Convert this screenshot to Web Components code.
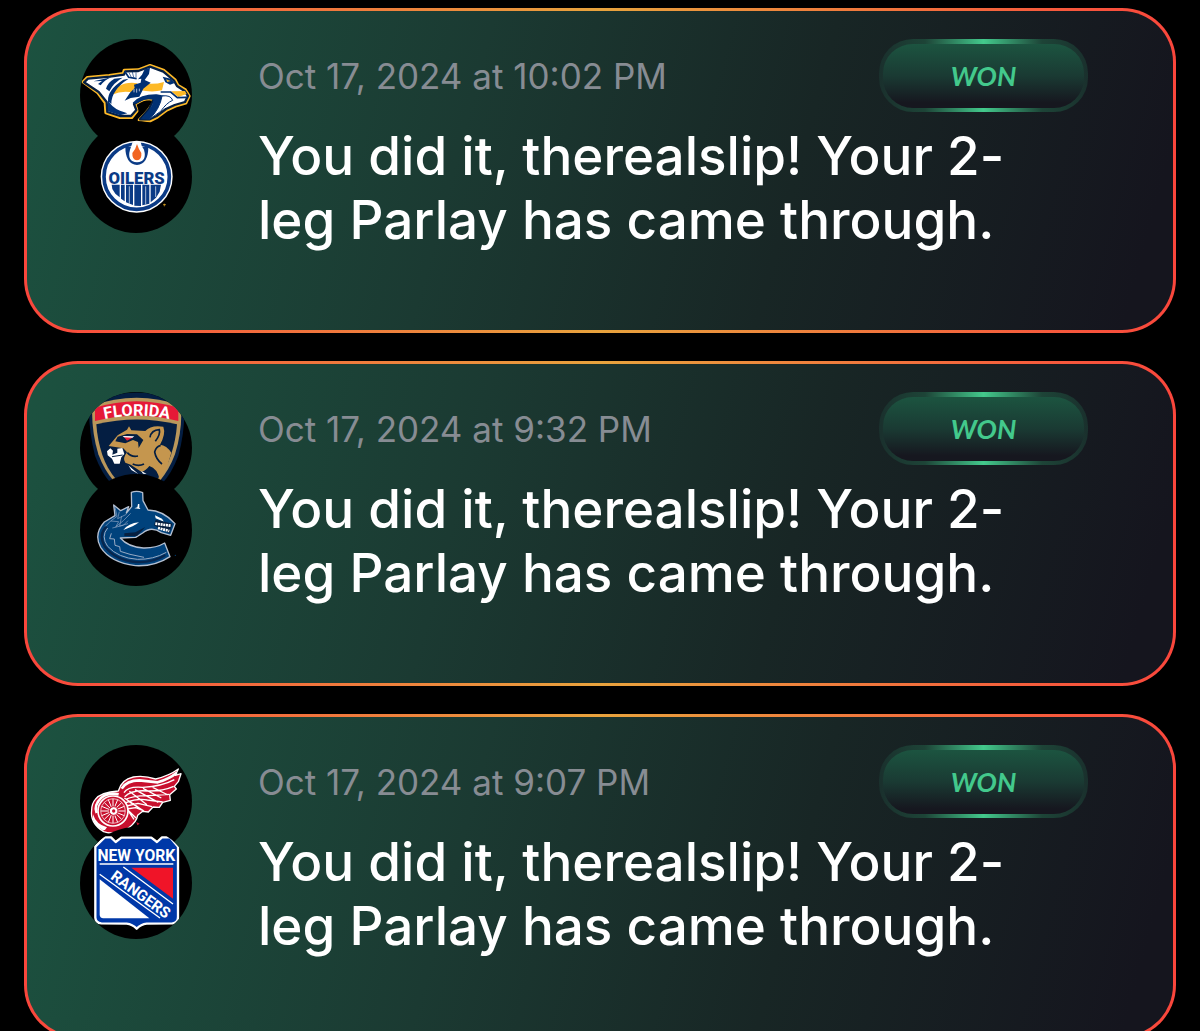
<!DOCTYPE html>
<html lang="en">
<head>
<meta charset="utf-8">
<meta name="viewport" content="width=device-width, initial-scale=1">
<title>Notifications</title>
<style>
  body {
    margin: 0;
    background: #000;
    color: #fff;
    font-family: Inter, "Liberation Sans", sans-serif;
  }
</style>
</head>
<body>
<notification-feed>
  <bet-card>
    <team-logo slot="teams" team="predators"></team-logo>
    <team-logo slot="teams" team="oilers"></team-logo>
    <time slot="date" datetime="2024-10-17T22:02">Oct 17, 2024 at 10:02 PM</time>
    <status-badge slot="status">WON</status-badge>
    You did it, therealslip! Your 2-leg Parlay has came through.
  </bet-card>
  <bet-card>
    <team-logo slot="teams" team="panthers"></team-logo>
    <team-logo slot="teams" team="canucks"></team-logo>
    <time slot="date" datetime="2024-10-17T21:32">Oct 17, 2024 at 9:32 PM</time>
    <status-badge slot="status">WON</status-badge>
    You did it, therealslip! Your 2-leg Parlay has came through.
  </bet-card>
  <bet-card>
    <team-logo slot="teams" team="redwings"></team-logo>
    <team-logo slot="teams" team="rangers"></team-logo>
    <time slot="date" datetime="2024-10-17T21:07">Oct 17, 2024 at 9:07 PM</time>
    <status-badge slot="status">WON</status-badge>
    You did it, therealslip! Your 2-leg Parlay has came through.
  </bet-card>
</notification-feed>

<script>
const LOGOS = {
  predators: {
    label: 'Nashville Predators',
    viewBox: '30 27 336 336',
    art: `
      <path fill="#fdb927" stroke="#fdb927" stroke-width="10" stroke-linejoin="round" d="M40 156 52 143 118 137 160 131 163 121 205 120 240 107 282 122 315 150 323 166 346 180 357 198 347 219 316 228 290 240 262 261 240 272 208 270 235 237 250 205 222 208 196 224 203 240 185 262 150 262 108 248 106 218 84 188Z"/>
      <path fill="#fff" stroke="#041e42" stroke-width="7" stroke-linejoin="round" d="M42 157 54 146 120 140 162 134 166 124 205 123 240 110 280 125 312 152 321 168 344 183 354 198 345 216 314 225 288 237 260 258 238 268 210 268 237 237 254 202 222 204 192 222 199 240 183 258 150 258 112 246 110 216 86 186Z"/>
      <path fill="#fdb927" d="M126 194Q142 158 186 158L202 160 190 188Q158 180 126 194ZM216 158Q248 166 282 156L276 181Q246 188 208 180ZM303 184 345 183 350 192 325 201Z"/>
      <path fill="#003073" d="M70 154 124 142Q104 150 92 166L84 162 96 153ZM133 146 158 143Q130 158 118 184L108 176Q114 156 133 146ZM160 149 176 146Q150 162 137 182 124 200 124 222L114 212Q112 180 160 149ZM224 118 240 113 237 132 224 150 242 158 220 176 208 200 182 204 164 212 180 188 194 174 192 164 212 158 214 146 204 148 216 134ZM114 210Q124 232 150 242L172 250 150 256 114 244ZM260 193 284 197Q284 222 268 240L238 269 212 268 236 240Q250 222 250 209 226 204 208 216 196 224 188 218 212 192 260 193ZM278 140 302 146 314 159 300 164 286 157Z"/>
      <path fill="none" stroke="#003073" stroke-width="5" d="M272 186 302 186 322 203 350 202M164 124 176 142 200 146"/>
      <path fill="#fff" stroke="#003073" stroke-width="3" d="M276 198Q302 194 308 211 290 218 272 244L238 268Q270 236 276 198Z"/>
      <path fill="#000" d="M200 224Q224 208 246 212 240 232 206 264L194 262 206 246 204 236Z"/>
      <path stroke="#003073" stroke-width="2" fill="none" d="M177 128 184 142M187 126 191 142M198 127 198 142"/>
      <path stroke="#fff" stroke-width="2" fill="none" d="M192 187V177M200 188V176M208 184V176"/>
      <path fill="#fdb927" d="M288 148 302 153 292 156Z"/>`
  },
  oilers: {
    label: 'Edmonton Oilers',
    viewBox: '30 -12 336 336',
    art: `
      <circle cx="200" cy="155" r="108" fill="#fff"/>
      <circle cx="200" cy="155" r="98" fill="#fff" stroke="#0b3b86" stroke-width="11"/>
      <path fill="#0b3b86" d="M166 65 235 65Q235 117 201 120 166 117 166 65Z"/>
      <path fill="#fff" d="M188 51 212 51Q214 65 222 74 232 109 201 112 170 109 180 74Z"/>
      <path fill="#f26522" d="M201 57Q206 73 214 84 216 105 201 106 186 105 187 84 197 73 201 57Z"/>
      <text x="200" y="176" text-anchor="middle" font-family="Roboto, sans-serif" font-size="50" font-weight="900" fill="#0b3b86">OILERS</text>
      <path fill="#0b3b86" d="M125 179H149V217L136 206 127 192ZM153 179H164V229L153 221ZM168 179H189V240L168 232ZM193 179H213V243L193 242ZM217 179H238V236L217 241ZM242 179H273L269 200 258 218 242 232Z"/>
      <path stroke="#fff" stroke-width="2" d="M178 184V236M227 184V238M257 184V216"/>
      <path stroke="#fdb927" stroke-width="2" d="M279 239H288M283 236V244"/>`
  },
  panthers: {
    label: 'Florida Panthers',
    viewBox: '30 24 336 336',
    art: `
      <path fill="#041e42" d="M58 56Q200 -5 342 56 347 135 325 215 286 320 200 350 114 320 75 215 54 135 58 56Z"/>
      <path fill="#b9975b" d="M67 65Q200 18 333 65 338 137 315 211 280 305 200 345 120 305 85 211 63 137 67 65Z"/>
      <path fill="#e51937" d="M75 71Q200 32 325 71L325 111Q200 80 75 111Z"/>
      <path fill="#041e42" d="M79 121Q200 92 321 121 318 167 303 213 274 296 200 334 126 296 97 213 82 167 79 121Z"/>
      <path id="arc" fill="none" d="M84 110Q200 80 318 110"/>
      <text font-family="Roboto, sans-serif" font-size="49" font-weight="700" fill="#fff"><textPath href="#arc" startOffset="50%" text-anchor="middle">FLORIDA</textPath></text>
      <path fill="#c5964e" d="M116 186 143 154 171 137 177 127 184 139 226 141Q243 122 280 128 288 149 270 182 290 184 304 206L290 252 270 290Q262 252 238 246 226 262 214 263L182 242 166 236Q156 224 171 205L160 193Z"/>
      <path fill="#041e42" d="M143 158 171 150 201 151 220 168 206 192 204 174 189 168 166 178 136 172Z"/>
      <path fill="none" stroke="#041e42" stroke-width="5" d="M240 160Q244 138 268 137 272 150 256 172M272 184Q258 188 254 204 258 226 276 240M172 206Q184 220 204 216M188 240Q206 248 222 240"/>
      <path fill="#e51937" d="M160 157 190 160 171 170Z"/>
      <path fill="#fff" d="M158 156 193 157 187 161 162 160ZM111 202 121 193 129 200 127 212 142 206 142 194 157 192 163 210 154 220 149 239 133 239 126 224 113 214ZM175 244 205 270 184 258ZM213 260 230 270 219 269Z"/>
      <path stroke="#041e42" stroke-width="3" fill="none" d="M126 218 158 213"/>`
  },
  canucks: {
    label: 'Vancouver Canucks',
    viewBox: '30 -15 336 336',
    art: `
      <path fill="#00427c" stroke="#b4bfd0" stroke-width="4" stroke-linejoin="round" d="M184 40Q201 34 218 41L219 65 234 93Q280 94 315 134L302 169 274 161Q244 140 218 162L197 175 151 177Q174 204 220 207 257 208 284 192L300 233Q255 263 196 260 121 250 92 205 70 166 103 129L135 110 131 78 152 95 176 83 169 102 185 83Z"/>
      <path stroke="#07264e" stroke-width="7" fill="none" d="M110 143Q84 166 104 202 138 246 200 249 251 251 286 228"/>
      <path stroke="#97aac4" stroke-width="3" fill="none" stroke-linejoin="round" d="M113 147Q92 172 113 202 145 237 202 241 250 242 289 220M124 163 119 179 133 180 135 199 149 203 151 217 180 226 222 235"/>
      <path stroke="#92a8c6" stroke-width="2" fill="none" d="M134 80 141 112 122 126 146 128 137 144 160 125 182 103M122 126 106 142M148 98 143 119 169 106M127 147 160 139 174 125M155 111 149 141 174 134"/>
      <path fill="#fff" d="M160 153Q175 133 207 130 192 142 160 153ZM193 88 202 85 204 75 208 75V86L212 90ZM255 109 276 119 282 128 257 118Z"/>
      <path fill="#061f3f" d="M163 163 196 160 226 144 201 171 163 171ZM257 122 287 129 307 134 298 163 274 151 252 139Z"/>
      <path stroke="#fff" stroke-width="8" stroke-dasharray="6 2" fill="none" d="M256 134 302 140M264 147 298 156"/>
      <circle cx="316" cy="229" r="2" fill="#00427c"/>`
  },
  redwings: {
    label: 'Detroit Red Wings',
    viewBox: '30 15 336 336',
    art: `
      <path fill="#c8102e" stroke="#fff" stroke-width="4" stroke-linejoin="round" d="M76 178Q92 157 145 153 154 119 190 111 220 105 257 117 298 107 325 87L316 106 333 101 325 125 313 139 319 147 299 164 301 181 278 187 268 202 249 201 235 216 218 214 203 226Q200 246 175 264 132 287 101 275 59 249 65 210 65 191 76 178Z"/>
      <path stroke="#fff" stroke-width="8" fill="none" d="M80 219Q70 197 94 173 115 156 146 163M155 146Q170 121 208 121L263 127Q299 116 320 98"/>
      <path stroke="#fff" stroke-width="4" fill="none" stroke-linejoin="round" d="M162 158Q174 138 218 142 277 139 313 119M164 170Q185 149 231 153 278 154 311 139M167 178Q196 165 238 167L298 163M168 188Q203 174 232 180L278 186M170 198 204 190 246 200M170 207 197 203 220 212M163 174 205 202M178 154 231 194M195 149 265 187M219 145 274 174M248 142 294 165M168 205 198 234M177 185 222 213M160 191 192 238"/>
      <circle cx="129" cy="213" r="45" fill="#c8102e" stroke="#fff" stroke-width="5"/>
      <circle cx="129" cy="213" r="37" fill="none" stroke="#fff" stroke-width="2"/>
      <path stroke="#fff" stroke-width="3" d="M129 177V249M93 213H165M103 188 155 238M103 238 155 188M115 179 143 247M143 179 115 247M95 199 163 227M95 227 163 199"/>
      <circle cx="131" cy="213" r="13" fill="#fff" stroke="#c8102e" stroke-width="3"/>
      <circle cx="131" cy="213" r="5" fill="#c8102e"/>
      <path fill="#fff" d="M69 223Q78 253 111 262 107 271 99 271 63 252 69 223Z"/>
      <path fill="#c8102e" d="M199 246 209 251 202 256Z"/>`
  },
  rangers: {
    label: 'New York Rangers',
    viewBox: '30 6 336 336',
    art: `
      <path fill="#0038a8" stroke="#fff" stroke-width="7" stroke-linejoin="round" d="M76 65 104 37 123 37 137 51 154 38H244L261 51 276 37H300L324 65V278Q323 294 307 295L230 296Q213 298 200 311 187 298 170 296L94 295Q77 294 76 278Z"/>
      <path stroke="#fff" stroke-width="5" d="M89 117H310"/>
      <path fill="#f01428" d="M184 128H309V221Z"/>
      <path fill="#fff" d="M89 163 238 280H100Q89 280 89 268Z"/>
      <path stroke="#fff" stroke-width="4" fill="none" d="M89 148 270 279M160 126 309 237"/>
      <text x="199" y="107" text-anchor="middle" font-family="Roboto, sans-serif" font-size="47" font-weight="700" fill="#fff">NEW YORK</text>
      <text transform="translate(119 160) rotate(36)" font-family="Roboto, sans-serif" font-size="46" font-weight="700" fill="#fff">RANGERS</text>`
  }
};

class NotificationFeed extends HTMLElement {
  constructor() {
    super();
    this.attachShadow({ mode: 'open' });
    this.shadowRoot.innerHTML = `
      <style>
        :host {
          display: block;
          height: 100vh;
          overflow-y: auto;
          scrollbar-width: none;
        }
        main {
          display: flex;
          flex-direction: column;
          gap: 28px;
          padding: 8px 24px;
        }
      </style>
      <main><slot></slot></main>
    `;
  }
}

class BetCard extends HTMLElement {
  constructor() {
    super();
    this.attachShadow({ mode: 'open' });
    this.shadowRoot.innerHTML = `
      <style>
        :host {
          display: block;
        }
        article {
          display: flex;
          gap: 66px;
          padding: 28px 85px 78px 53px;
          border: 3px solid transparent;
          border-radius: 54px;
          background:
            linear-gradient(105deg, #1c5240 0%, #1b3a32 38%, #182625 66%, #15151e 96%) padding-box,
            linear-gradient(90deg, #fa463c, #e8a33d 50%, #fa463c) border-box;
        }
        .teams {
          display: flex;
          flex-direction: column;
          flex: none;
          padding-bottom: 30px;
        }
        /* each logo is overlapped by the one below it */
        ::slotted(team-logo) {
          margin-bottom: -30px;
        }
        .body {
          flex: 1;
          min-width: 0;
        }
        header {
          display: flex;
          justify-content: space-between;
          align-items: center;
          gap: 24px;
          margin-bottom: 12px;
          color: #878c93;
          font-size: 35px;
          line-height: 40px;
        }
        h2 {
          margin: 0;
          padding-right: 32px;
          font-size: 53px;
          font-weight: 500;
          line-height: 64px;
        }
      </style>
      <article>
        <div class="teams"><slot name="teams"></slot></div>
        <div class="body">
          <header>
            <slot name="date"></slot>
            <slot name="status"></slot>
          </header>
          <h2><slot></slot></h2>
        </div>
      </article>
    `;
  }
}

class TeamLogo extends HTMLElement {
  constructor() {
    super();
    this.attachShadow({ mode: 'open' });
  }

  connectedCallback() {
    const logo = LOGOS[this.getAttribute('team')];
    this.shadowRoot.innerHTML = `
      <style>
        :host {
          display: block;
          width: 112px;
          height: 112px;
          border-radius: 50%;
          background: #000;
          overflow: hidden;
        }
        svg {
          display: block;
          width: 100%;
          height: 100%;
        }
      </style>
      <svg viewBox="${logo.viewBox}" role="img" aria-label="${logo.label}">${logo.art}</svg>
    `;
  }
}

class StatusBadge extends HTMLElement {
  constructor() {
    super();
    this.attachShadow({ mode: 'open' });
    this.shadowRoot.innerHTML = `
      <style>
        :host {
          display: block;
          flex: none;
        }
        span {
          display: block;
          box-sizing: border-box;
          min-width: 209px;
          padding: 12px 24px;
          border: 4px solid transparent;
          border-top-width: 5px;
          border-radius: 34px;
          background:
            linear-gradient(#1c5440, #1a3a33 50%, #16171f 92%) padding-box,
            linear-gradient(90deg, #1a302d, #1d4437 22%, #43c98c 50%, #1d4437 78%, #1a302d) border-box;
          color: #43c98c;
          font: italic 700 27px/40px Lato, sans-serif;
          text-align: center;
        }
      </style>
      <span><slot></slot></span>
    `;
  }
}

customElements.define('notification-feed', NotificationFeed);
customElements.define('bet-card', BetCard);
customElements.define('team-logo', TeamLogo);
customElements.define('status-badge', StatusBadge);
</script>
</body>
</html>
